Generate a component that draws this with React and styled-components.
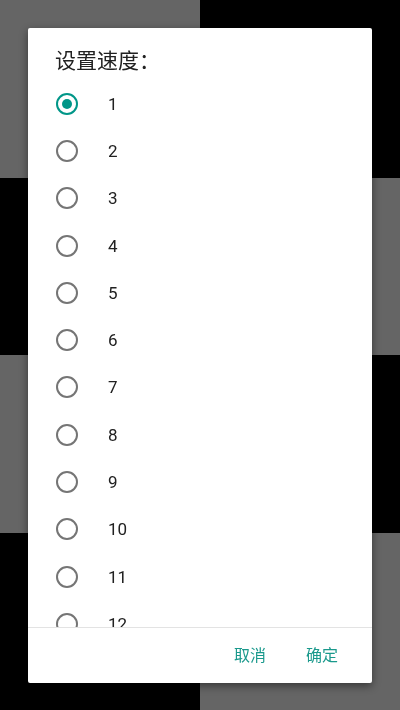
import styled, { createGlobalStyle } from "styled-components";

const GlobalStyle = createGlobalStyle`
  html, body {
    margin: 0;
    padding: 0;
    width: 400px;
    height: 710px;
    overflow: hidden;
    font-family: Roboto, "Noto Sans CJK SC", sans-serif;
  }
`;

const Checker = styled.div`
  display: grid;
  grid-template-columns: repeat(2, 200px);
  grid-template-rows: repeat(4, 177.5px);
  width: 400px;
  height: 710px;
`;

const Cell = styled.div`
  background: ${(p) => (p.$dark ? "#000" : "#656565")};
`;

const Dialog = styled.div`
  position: fixed;
  top: 28px;
  left: 28px;
  width: 344px;
  height: 655px;
  background: #fff;
  border-radius: 2px;
  box-shadow: 0 3px 8px rgba(0, 0, 0, 0.45);
  display: flex;
  flex-direction: column;
`;

const Title = styled.h2`
  margin: 0;
  padding: 19px 0 5px 27px;
  font-family: Roboto, "Noto Sans CJK SC", sans-serif;
  font-size: 21px;
  font-weight: 400;
  line-height: 28px;
  color: #212121;
`;

const List = styled.div`
  flex: 1;
  overflow: hidden;
  border-bottom: 1px solid #e3e3e3;
`;

const Row = styled.label`
  display: flex;
  align-items: center;
  height: 47.3px;
  padding-left: 28px;
`;

const Radio = styled.span`
  box-sizing: border-box;
  width: 22px;
  height: 22px;
  border-radius: 50%;
  border: 2px solid ${(p) => (p.$checked ? "#009688" : "#757575")};
  display: flex;
  align-items: center;
  justify-content: center;

  &::after {
    content: "";
    width: 10px;
    height: 10px;
    border-radius: 50%;
    background: ${(p) => (p.$checked ? "#009688" : "transparent")};
  }
`;

const Label = styled.span`
  margin-left: 30px;
  font-size: 17px;
  color: #212121;
`;

const Actions = styled.div`
  height: 55px;
  box-sizing: border-box;
  padding: 0 26px 3px 0;
  display: flex;
  align-items: center;
  justify-content: flex-end;
  gap: 24px;
`;

const Button = styled.button`
  border: none;
  background: none;
  padding: 0 8px;
  font-family: "Noto Sans CJK SC", sans-serif;
  font-size: 16px;
  color: #1a998c;
`;

export default function App() {
  const speeds = Array.from({ length: 12 }, (_, i) => i + 1);
  return (
    <>
      <GlobalStyle />
      <Checker>
        {[0, 1, 2, 3, 4, 5, 6, 7].map((i) => (
          <Cell key={i} $dark={(Math.floor(i / 2) + (i % 2)) % 2 === 1} />
        ))}
      </Checker>
      <Dialog>
        <Title>设置速度：</Title>
        <List>
          {speeds.map((n) => (
            <Row key={n}>
              <Radio $checked={n === 1} />
              <Label>{n}</Label>
            </Row>
          ))}
        </List>
        <Actions>
          <Button>取消</Button>
          <Button>确定</Button>
        </Actions>
      </Dialog>
    </>
  );
}
